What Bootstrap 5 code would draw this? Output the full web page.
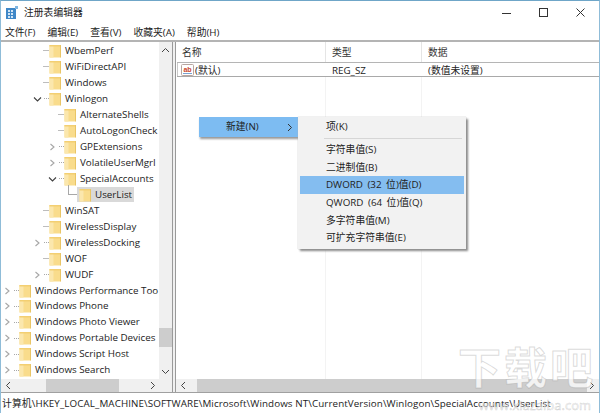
<!DOCTYPE html>
<html lang="zh"><head><meta charset="utf-8">
<link href="https://cdn.jsdelivr.net/npm/bootstrap@5.3.0/dist/css/bootstrap.min.css" rel="stylesheet">
<style>
html,body{margin:0;height:413px;width:600px;overflow:hidden;background:#fff}
body{font-family:"Open Sans","Noto Sans CJK SC",sans-serif;font-size:9.8px;color:#1c1c1c;line-height:16px}
.win{width:600px;height:413px;position:relative;border-top:1px solid #6fa6c8;border-right:1px solid #8fbcd8;border-left:1px solid #8fbcd8;overflow:hidden}
.ttl{height:23px;flex:none}
.ttl-t{font-size:9.8px;margin-left:5px;padding-top:1px;color:#222}
.ttl-ic{margin-left:5px}
.wbtn{width:37px;height:23px}
.mbar{height:16px;flex:none;padding:1px 0 0 4px;gap:12px}
.mainw{flex:1 1 auto;min-height:0;border-top:2px solid #b4b4b4}
.tree-p{width:172px;flex:none;border-right:1px solid #9a9a9a;position:relative;overflow:hidden;display:flex;flex-direction:column}
.split{width:2px;flex:none;background:#f0f0f0}
.list-p{flex:1 1 auto;border-left:1px solid #9a9a9a;min-width:0;display:flex;flex-direction:column}
.tree-b{flex:1 1 auto;min-height:0;display:flex;overflow:hidden}
.tree-s{flex:1 1 auto;overflow:hidden;width:157px;padding-top:1px}
.rw{height:15.97px;display:flex;align-items:center;white-space:nowrap;color:#222}
.l0{padding-left:2px}.l1{padding-left:32px}.l2{padding-left:47px}.l3{padding-left:62px}
.chev{width:9px;height:16px;flex:none;display:flex;align-items:center}
.tick{width:6px;flex:none;height:1px;background:#bdbdbd;margin-left:1px}
.tick.dot{background:repeating-linear-gradient(90deg,#a8a8a8 0 1px,transparent 1px 2px);width:5px;margin-left:2px}
.fold{width:12px;height:14px;flex:none;margin:0 4px 0 0}
.rw .sel{background:#d9d9d9;height:15px;padding:0 2px;display:flex;align-items:center}
.lshape{width:9px;height:10px;margin:-10px 0 0 5px;border-left:1px solid #a8a8a8;border-bottom:1px solid #a8a8a8;flex:none}
.vsb{width:13px;flex:none;background:#f0f0f0;display:flex;flex-direction:column;align-items:center}
.vthumb{width:100%;height:19px;background:#cdcdcd;margin-top:275px}
.vup{margin-top:5px}.vdn{margin-top:22px}
.hsb{height:13px;flex:none;background:#f0f0f0;display:flex;align-items:center}
.hthumb{height:100%;background:#cdcdcd}
.arr{flex:none}
.ht1{width:73px;margin-left:35px}.ht2{flex:1 1 auto;margin-left:11px}
.hsb-end{margin-left:2px}
.lh{height:20px;flex:none;display:flex;color:#333}
.lc1{width:150px;padding-left:6px}.lc2{width:96px;padding-left:6px}.lc3{flex:1;padding-left:6px}
.lh>div{border-right:1px solid #e5e5e5;line-height:22px}
.lh>div:last-child{border:0}
.lr{height:15px;flex:none;display:flex;align-items:center;margin-left:1px;box-shadow:inset 0 1px 0 #b5b5b5,inset 0 -1px 0 #a9a9a9,inset 1px 0 0 #c9c9c9;color:#222;line-height:15px;padding-top:1px}
.lr .lc1{padding-left:4px;width:149px;display:flex;align-items:center;gap:1px}
.lbody{flex:1 1 auto;min-height:0;display:flex}
.lbody i{display:block;border-right:1px solid #f3f3f3}
.lg1{width:150px}.lg2{width:96px}
.stat{height:21px;flex:none;border-top:1px solid #a0a0a0;line-height:21px;padding-left:1px;white-space:nowrap;overflow:hidden;color:#222;letter-spacing:.1px}
.cm1{position:absolute;left:198px;top:116px;width:101px;height:20px;background:#7dbcf2;box-shadow:1px 2px 2px #999;display:flex;align-items:center}
.cm1 span:first-child{margin-left:27px;flex:1}
.cm1 svg{margin-right:7px}
.cm2{position:absolute;left:297px;top:116px;width:168px;height:132px;background:#f2f2f2;box-shadow:0 0 1px #aaa,2px 2px 2px #888;padding:1px 2px;z-index:2}
.mi{height:17.6px;line-height:17.6px;padding-left:26px;color:#222;word-spacing:2px}
.mi.on{background:#84bdf0}
.msep{height:1px;background:#d6d6d6;margin:2px 2px 2.6px 24px}
.wm{position:absolute;z-index:3;pointer-events:none}
.wm1{right:3px;top:338px;font-family:"Noto Sans CJK SC",sans-serif;font-size:43px;line-height:52px;font-weight:700;color:rgba(255,255,255,.75);-webkit-text-stroke:1px rgba(150,150,150,.35);letter-spacing:3px}
.wm2{right:8px;top:396px;font-size:13px;line-height:16px;color:rgba(255,255,255,.7);-webkit-text-stroke:.5px rgba(150,150,150,.45)}
</style></head>
<body>
<svg width="0" height="0" class="d-block position-absolute"><defs>
<symbol id="f" viewBox="0 0 12 14"><path d="M.5 1h11v12.5H.5z" fill="#f9dc8c"/><path d="M.5 1h4v12.5h-4z" fill="#fbe7ad"/><path d="M.5 1h11v1.5H.5z" fill="#f3cf72"/><path d="M11.5 1v12.5" stroke="#e9c566"/></symbol>
<symbol id="r" viewBox="0 0 9 16"><path d="M2.5 5l3.5 3-3.5 3" fill="none" stroke="#a6a6a6" stroke-width="1.1"/></symbol>
<symbol id="d" viewBox="0 0 9 16"><path d="M1 6.5l3.5 3.5L8 6.5" fill="none" stroke="#404040" stroke-width="1.1"/></symbol>
</defs></svg>
<div class="win d-flex flex-column">
 <div class="ttl d-flex align-items-center">
  <svg class="ttl-ic" width="13" height="13" viewBox="0 0 13 13"><rect x="0" y="2" width="10" height="11" fill="#3f87c7"/><path d="M2 4h2v2H2zM5 4h2v2H5zM2 7h2v2H2zM5 7h2v2H5zM2 10h2v2H2zM5 10h2v2H5z" fill="#cfe4f5"/><rect x="9" y="0" width="3" height="3" fill="#7fb5e0"/></svg>
  <span class="ttl-t">注册表编辑器</span>
  <div class="ms-auto d-flex">
   <div class="wbtn d-flex align-items-center justify-content-center"><svg width="10" height="10"><path d="M0 5.5h9" stroke="#333"/></svg></div>
   <div class="wbtn d-flex align-items-center justify-content-center"><svg width="10" height="10"><rect x=".5" y=".5" width="8" height="8" fill="none" stroke="#333"/></svg></div>
   <div class="wbtn d-flex align-items-center justify-content-center"><svg width="10" height="10"><path d="M.5.5l8 8M8.5.5l-8 8" stroke="#333"/></svg></div>
  </div>
 </div>
 <div class="mbar d-flex align-items-center"><span>文件(F)</span><span>编辑(E)</span><span>查看(V)</span><span>收藏夹(A)</span><span>帮助(H)</span></div>
 <div class="mainw d-flex flex-grow-1">
  <div class="tree-p">
   <div class="tree-b">
    <div class="tree-s">
     <div class="rw l1"><span class="chev"></span><span class="tick"></span><svg class="fold"><use href="#f"/></svg>WbemPerf</div>
     <div class="rw l1"><span class="chev"></span><span class="tick"></span><svg class="fold"><use href="#f"/></svg>WiFiDirectAPI</div>
     <div class="rw l1"><span class="chev"></span><span class="tick"></span><svg class="fold"><use href="#f"/></svg>Windows</div>
     <div class="rw l1"><svg class="chev"><use href="#d"/></svg><span class="tick dot"></span><svg class="fold"><use href="#f"/></svg>Winlogon</div>
     <div class="rw l2"><span class="chev"></span><span class="tick"></span><svg class="fold"><use href="#f"/></svg>AlternateShells</div>
     <div class="rw l2"><span class="chev"></span><span class="tick"></span><svg class="fold"><use href="#f"/></svg>AutoLogonCheck</div>
     <div class="rw l2"><svg class="chev"><use href="#r"/></svg><span class="tick dot"></span><svg class="fold"><use href="#f"/></svg>GPExtensions</div>
     <div class="rw l2"><svg class="chev"><use href="#r"/></svg><span class="tick dot"></span><svg class="fold"><use href="#f"/></svg>VolatileUserMgrI</div>
     <div class="rw l2"><svg class="chev"><use href="#d"/></svg><span class="tick dot"></span><svg class="fold"><use href="#f"/></svg>SpecialAccounts</div>
     <div class="rw l3"><span class="lshape"></span><span class="sel"><svg class="fold"><use href="#f"/></svg>UserList</span></div>
     <div class="rw l1"><span class="chev"></span><span class="tick"></span><svg class="fold"><use href="#f"/></svg>WinSAT</div>
     <div class="rw l1"><span class="chev"></span><span class="tick"></span><svg class="fold"><use href="#f"/></svg>WirelessDisplay</div>
     <div class="rw l1"><svg class="chev"><use href="#r"/></svg><span class="tick dot"></span><svg class="fold"><use href="#f"/></svg>WirelessDocking</div>
     <div class="rw l1"><span class="chev"></span><span class="tick"></span><svg class="fold"><use href="#f"/></svg>WOF</div>
     <div class="rw l1"><svg class="chev"><use href="#r"/></svg><span class="tick dot"></span><svg class="fold"><use href="#f"/></svg>WUDF</div>
     <div class="rw l0"><svg class="chev"><use href="#r"/></svg><span class="tick dot"></span><svg class="fold"><use href="#f"/></svg>Windows Performance Too</div>
     <div class="rw l0"><svg class="chev"><use href="#r"/></svg><span class="tick dot"></span><svg class="fold"><use href="#f"/></svg>Windows Phone</div>
     <div class="rw l0"><svg class="chev"><use href="#r"/></svg><span class="tick dot"></span><svg class="fold"><use href="#f"/></svg>Windows Photo Viewer</div>
     <div class="rw l0"><svg class="chev"><use href="#r"/></svg><span class="tick dot"></span><svg class="fold"><use href="#f"/></svg>Windows Portable Devices</div>
     <div class="rw l0"><svg class="chev"><use href="#r"/></svg><span class="tick dot"></span><svg class="fold"><use href="#f"/></svg>Windows Script Host</div>
     <div class="rw l0"><svg class="chev"><use href="#r"/></svg><span class="tick dot"></span><svg class="fold"><use href="#f"/></svg>Windows Search</div>
     <div class="rw l0"><svg class="chev"><use href="#r"/></svg><span class="tick dot"></span><svg class="fold"><use href="#f"/></svg></div>
    </div>
    <div class="vsb">
     <svg class="vup" width="9" height="6"><path d="M1 5l3.5-3.5L8 5" fill="none" stroke="#444"/></svg>
     <div class="vthumb"></div>
     <svg class="vdn" width="9" height="6"><path d="M1 1l3.5 3.5L8 1" fill="none" stroke="#444"/></svg>
    </div>
   </div>
   <div class="hsb">
    <svg class="ms-1 arr" width="6" height="9"><path d="M5 1L1.5 4.5 5 8" fill="none" stroke="#444"/></svg>
    <div class="hthumb ht1"></div>
    <svg class="ms-auto arr me-3" width="6" height="9"><path d="M1 1l3.5 3.5L1 8" fill="none" stroke="#444"/></svg>
   </div>
  </div>
  <div class="split"></div>
  <div class="list-p">
   <div class="lh"><div class="lc1">名称</div><div class="lc2">类型</div><div class="lc3">数据</div></div>
   <div class="lr"><div class="lc1"><svg width="13" height="12" viewBox="0 0 13 12"><rect x=".5" y=".5" width="12" height="11" rx="1" fill="#fff" stroke="#b9a6a0"/><text x="6.5" y="7.5" font-size="7" font-weight="700" fill="#c8452c" text-anchor="middle" font-family="Liberation Sans">ab</text><path d="M2 9.5h9" stroke="#7aa3d0"/></svg><span>(默认)</span></div><div class="lc2">REG_SZ</div><div class="lc3">(数值未设置)</div></div>
   <div class="lbody"><i class="lg1"></i><i class="lg2"></i></div>
   <div class="hsb">
    <svg class="ms-1 arr" width="6" height="9"><path d="M5 1L1.5 4.5 5 8" fill="none" stroke="#444"/></svg>
    <div class="hthumb ht2"></div>
    <svg class="hsb-end arr me-1" width="6" height="9"><path d="M1 1l3.5 3.5L1 8" fill="none" stroke="#444"/></svg>
   </div>
  </div>
 </div>
 <div class="stat">计算机\HKEY_LOCAL_MACHINE\SOFTWARE\Microsoft\Windows NT\CurrentVersion\Winlogon\SpecialAccounts\UserList</div>
 <div class="cm1"><span>新建(N)</span><svg width="6" height="9"><path d="M1 1l3.5 3.5L1 8" fill="none" stroke="#333"/></svg></div>
 <div class="cm2">
  <div class="mi">项(K)</div>
  <div class="msep"></div>
  <div class="mi">字符串值(S)</div>
  <div class="mi">二进制值(B)</div>
  <div class="mi on">DWORD (32 位)值(D)</div>
  <div class="mi">QWORD (64 位)值(Q)</div>
  <div class="mi">多字符串值(M)</div>
  <div class="mi">可扩充字符串值(E)</div>
 </div>
 <div class="wm wm1">下载吧</div>
 <div class="wm wm2">www.xiazaiba.com</div>
</div>
<script src="https://cdn.jsdelivr.net/npm/bootstrap@5.3.0/dist/js/bootstrap.bundle.min.js"></script>
</body></html>
